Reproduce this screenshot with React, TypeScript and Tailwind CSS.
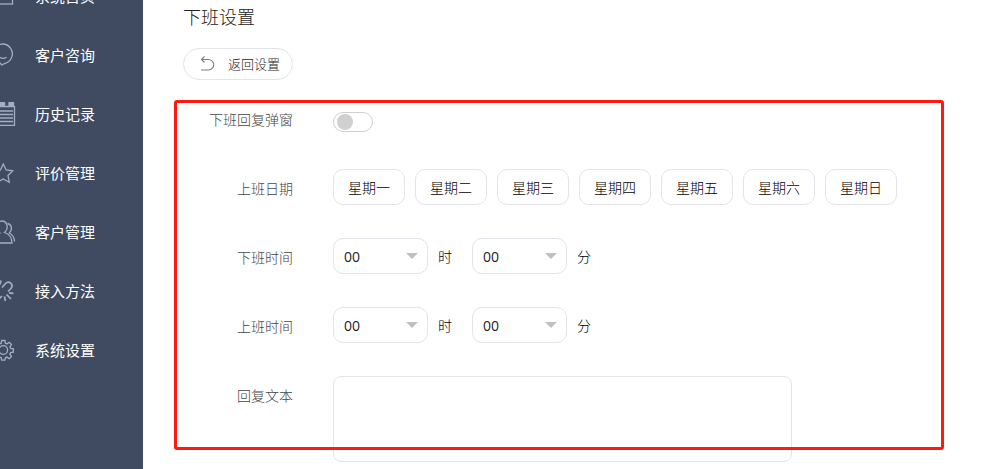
import { useState, type ReactNode } from "react";

const days = ["星期一", "星期二", "星期三", "星期四", "星期五", "星期六", "星期日"];
const hours = Array.from({ length: 24 }, (_, i) => String(i).padStart(2, "0"));
const minutes = Array.from({ length: 60 }, (_, i) => String(i).padStart(2, "0"));

const navItems: { label: string; icon: ReactNode }[] = [
  { label: "系统首页", icon: <rect x="2" y="3" width="18.5" height="17" /> },
  {
    label: "客户咨询",
    icon: (
      <>
        <path d="M8.5 20.4A9.8 9.8 0 1 1 13 20.3L9.6 22Z" />
        <path d="M7.5 14.3q3.5 2.2 7 0" />
      </>
    ),
  },
  {
    label: "历史记录",
    icon: (
      <>
        <path d="M1 4.500h21.500v19H1z" />
        <path d="M5 9h16M5 12.500h16M5 16h16M5 19.500h16" />
        <path d="M2 0h4v4H2zM8.500 0h4v4h-4zM17 0h4.500v4H17z" fill="currentColor" />
      </>
    ),
  },
  {
    label: "评价管理",
    icon: <path d="M11.300 3l2.900 6 6.500.8-4.700 4.700 1.300 6.700-6-3.200-6 3.200 1.200-6.700-4.700-4.700 6.600-.8z" />,
  },
  {
    label: "客户管理",
    icon: (
      <>
        <path d="M8 13C3.500 9.500 4.500 1 10 1s7 8 2.500 11.500c4.500 1.500 7.500 5 7.500 10.500H.5c0-5.500 3-8.500 7.500-10z" />
        <path d="M15.500 3.500c4 .5 5.500 5.500 1.800 9.500 3.200 1.700 5.200 4.500 5.200 8.500" />
      </>
    ),
  },
  {
    label: "接入方法",
    icon: (
      <g strokeWidth="1.7">
        <path d="M10 8.500l3.500-4c3.500-3.500 8.500 1 5.500 5l-3 3" />
        <path d="M7 10l-4 4c-3.500 4 1.500 8.500 5 5l2-2" />
        <path d="M9 1.500l-1 4M3 4l3 3M17 13.800l4.500.5M14.500 15.500l4.500 4.500M12.500 17.500l.8 4.500" />
      </g>
    ),
  },
  {
    label: "系统设置",
    icon: (
      <>
        <circle cx="11.300" cy="12" r="4.300" />
        <path d="M9.700 2.500h3.200l.5 2.700 1.600.7 2.300-1.600 2.200 2.200-1.600 2.300.7 1.600 2.700.5v3.200l-2.700.5-.7 1.600 1.600 2.300-2.200 2.200-2.300-1.600-1.600.7-.5 2.400H9.700l-.5-2.400-1.600-.7-2.300 1.600-2.200-2.200 1.600-2.300-.7-1.600-2.700-.5v-3.200l2.700-.5.7-1.600-1.600-2.300 2.200-2.200 2.300 1.600 1.600-.7z" />
      </>
    ),
  },
];

function Row({ label, htmlFor, children }: { label: string; htmlFor?: string; children: ReactNode }) {
  return (
    <div className="flex min-h-9 items-start gap-10">
      <label htmlFor={htmlFor} className="h-9 w-[110px] shrink-0 text-right leading-[38px] text-[#444]">
        {label}
      </label>
      {children}
    </div>
  );
}

function NumberSelect({ id, label, options }: { id: string; label: string; options: string[] }) {
  return (
    <div className="relative">
      <select
        id={id}
        aria-label={label}
        className="block h-9 w-[95px] appearance-none rounded-[10px] border border-[#e3e3ea] bg-white px-2.5 font-['Open_Sans',sans-serif] font-normal text-[#222]"
      >
        {options.map((o) => (
          <option key={o}>{o}</option>
        ))}
      </select>
      <svg className="pointer-events-none absolute top-[15px] right-2.5 h-1.5 w-3" viewBox="0 0 12 6">
        <path d="M0 0h12L6 6z" fill="#c0c0c0" />
      </svg>
    </div>
  );
}

function TimeFields({ id, name }: { id: string; name: string }) {
  return (
    <div className="flex h-9 gap-2.5 leading-9">
      <NumberSelect id={id} label={name + "时"} options={hours} />
      <span>时</span>
      <div className="ml-2.5">
        <NumberSelect id={id + "-minute"} label={name + "分"} options={minutes} />
      </div>
      <span>分</span>
    </div>
  );
}

export default function App() {
  const [popup, setPopup] = useState(false);
  const [selected, setSelected] = useState<string[]>([]);

  const toggleDay = (day: string) =>
    setSelected((s) => (s.includes(day) ? s.filter((d) => d !== day) : [...s, day]));

  return (
    <div className="flex h-screen overflow-hidden bg-white font-['Noto_Sans_CJK_SC',sans-serif] text-sm font-light text-black">
      <nav className="w-[143px] shrink-0 overflow-hidden bg-[#404a60]">
        <ul className="-mt-[34px] -ml-2">
          {navItems.map((item) => (
            <li key={item.label}>
              <a href="#" className="flex h-[59px] items-center gap-[19px] text-[15px] font-normal text-white">
                <svg
                  viewBox="0 0 24 24"
                  className="size-6 shrink-0 text-[#a3aec4]"
                  fill="none"
                  stroke="currentColor"
                  strokeWidth="1.3"
                >
                  {item.icon}
                </svg>
                {item.label}
              </a>
            </li>
          ))}
        </ul>
      </nav>

      <main className="min-w-0 flex-1 pl-10">
        <h1 className="text-lg leading-8 text-[#222]">下班设置</h1>
        <button className="mt-4 flex h-8 w-[110px] items-center gap-[13px] rounded-full border border-[#e3e3ea] pl-[15px] text-[13px] text-[#222]">
          <svg viewBox="0 0 16 16" className="size-4" fill="none" stroke="#777d88" strokeWidth="1.1">
            <path d="M5.500.5l-3 3 3 3M2.500 3.500h7a5 5 0 0 1 0 10.500H2" />
          </svg>
          返回设置
        </button>

        <form className="relative mt-5 flex flex-col gap-[33px]">
          <Row label="下班回复弹窗" htmlFor="popup">
            <span className="relative mt-3 flex h-5 w-10 items-center rounded-full border border-[#d0d0d0] px-[3px]">
              <input
                id="popup"
                type="checkbox"
                role="switch"
                checked={popup}
                onChange={(e) => setPopup(e.target.checked)}
                className="peer absolute inset-0 cursor-pointer appearance-none rounded-full"
              />
              <span className="pointer-events-none size-4 rounded-full bg-[#d0d0d0] peer-checked:ml-auto peer-checked:bg-[#404a60]" />
            </span>
          </Row>

          <Row label="上班日期">
            <div className="flex gap-2.5">
              {days.map((day) => (
                <button
                  key={day}
                  type="button"
                  aria-pressed={selected.includes(day)}
                  onClick={() => toggleDay(day)}
                  className="h-9 w-[72px] shrink-0 rounded-[10px] border border-[#e3e3ea] aria-pressed:bg-[#e3e3ea]"
                >
                  {day}
                </button>
              ))}
            </div>
          </Row>

          <Row label="下班时间" htmlFor="off">
            <TimeFields id="off" name="下班时间" />
          </Row>
          <Row label="上班时间" htmlFor="on">
            <TimeFields id="on" name="上班时间" />
          </Row>

          <Row label="回复文本" htmlFor="reply">
            <textarea
              id="reply"
              className="h-[86px] w-full max-w-[459px] resize-none rounded-lg border border-[#e3e3ea] p-2.5"
            />
          </Row>

          <div className="pointer-events-none absolute top-0 -left-[9px] h-[350px] w-full max-w-[770px] rounded-[3px] border-3 border-[#ff1a10]" />
        </form>
      </main>
    </div>
  );
}
